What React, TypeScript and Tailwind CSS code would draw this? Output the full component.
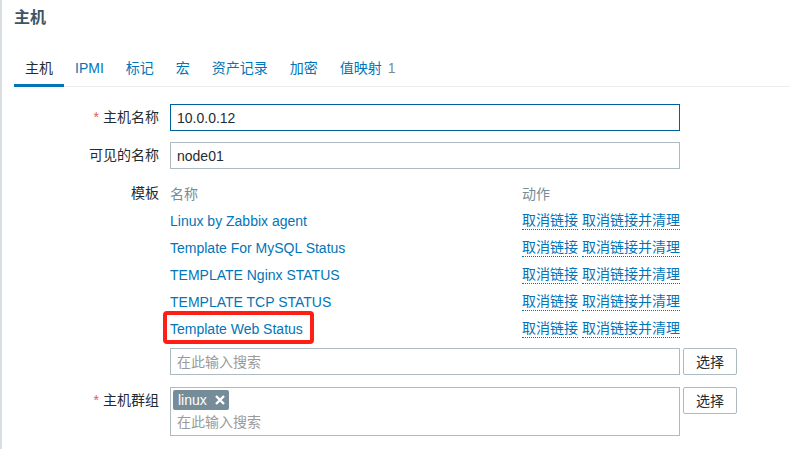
import type { ReactNode } from "react";

const tabs = [
  { label: "主机", active: true },
  { label: "IPMI" },
  { label: "标记" },
  { label: "宏" },
  { label: "资产记录" },
  { label: "加密" },
  { label: "值映射", count: 1 },
];

const templates = [
  { name: "Linux by Zabbix agent" },
  { name: "Template For MySQL Status" },
  { name: "TEMPLATE Nginx STATUS" },
  { name: "TEMPLATE TCP STATUS" },
  { name: "Template Web Status", marked: true },
];

function Row({ label, id, required, children }: { label: string; id: string; required?: boolean; children: ReactNode }) {
  return (
    <div className="flex items-start gap-[11px]">
      <label htmlFor={id} className="w-[145px] shrink-0 text-right leading-[27px]">
        {required && <span className="mr-1 text-[#e45959]">*</span>}
        {label}
      </label>
      <div className="min-w-0 flex-1">{children}</div>
    </div>
  );
}

function SelectButton() {
  return (
    <button type="button" className="h-[27px] w-[54px] shrink-0 rounded-[2px] border border-[#acbbc2] bg-white">
      选择
    </button>
  );
}

function ActionButton({ children }: { children: ReactNode }) {
  return (
    <button type="button" className="border-b border-dotted border-[#0275b8] leading-[18px] text-[#0275b8]">
      {children}
    </button>
  );
}

export default function App() {
  return (
    <div className="min-h-screen border-l-2 border-[#d7dde1] bg-white pl-3 font-['Liberation_Sans','Noto_Sans_CJK_SC',sans-serif] text-sm text-[#1f2c33]">
      <h1 className="pt-[5px] text-base leading-[26px] font-bold text-[#3c5563]">主机</h1>

      <nav className="mt-[21px] flex border-b border-[#ebeef0]">
        {tabs.map((tab) => (
          <a
            key={tab.label}
            href="#"
            className={
              tab.active
                ? "-mb-px border-b-3 border-[#0275b8] px-[11px] pt-1 pb-1 leading-6"
                : "px-[11px] pt-1 pb-1 leading-6 text-[#0275b8]"
            }
          >
            {tab.label}
            {tab.count && <span className="ml-[6px] text-[#768d99]">{tab.count}</span>}
          </a>
        ))}
      </nav>

      <form className="flex flex-col gap-[11px] pt-[17px]">
        <Row label="主机名称" id="host" required>
          <input id="host" defaultValue="10.0.0.12" className="block h-[27px] w-full max-w-[510px] border border-[#00609a] px-[6px] outline-none" />
        </Row>
        <Row label="可见的名称" id="visible">
          <input id="visible" defaultValue="node01" className="block h-[27px] w-full max-w-[510px] border border-[#acbbc2] px-[6px] outline-none" />
        </Row>
        <Row label="模板" id="templates">
          <table className="w-full max-w-[510px] text-left">
            <thead>
              <tr className="h-[27px] text-[#768d99]">
                <th className="p-0 font-normal">名称</th>
                <th className="w-[157px] p-0 font-normal">动作</th>
              </tr>
            </thead>
            <tbody>
              {templates.map((t) => (
                <tr key={t.name} className="h-[27px]">
                  <td className="p-0">
                    <span className="relative">
                      <a href="#" className="text-[#0275b8]">{t.name}</a>
                      {t.marked && (
                        <span className="pointer-events-none absolute -top-[10px] -right-[11px] -bottom-[7px] -left-[7px] rounded-[4px] border-4 border-[#ff2015]" />
                      )}
                    </span>
                  </td>
                  <td className="p-0">
                    <div className="flex gap-1 whitespace-nowrap">
                      <ActionButton>取消链接</ActionButton>
                      <ActionButton>取消链接并清理</ActionButton>
                    </div>
                  </td>
                </tr>
              ))}
            </tbody>
          </table>
          <div className="mt-[6px] mb-px flex gap-[3px]">
            <input id="templates" placeholder="在此输入搜索" className="block h-[27px] w-full max-w-[510px] border border-[#acbbc2] px-[6px] outline-none placeholder:text-[#9a9a9a]" />
            <SelectButton />
          </div>
        </Row>
        <Row label="主机群组" id="groups" required>
          <div className="flex items-start gap-[3px]">
            <div className="w-full max-w-[510px] border border-[#acbbc2] px-[2px] pt-[2px] pb-[2px]">
              <span className="flex h-5 w-14 items-center justify-between rounded-[2px] bg-[#768d99] pr-1 pl-[5px] text-white">
                linux
                <button type="button" aria-label="移除 linux">
                  <svg viewBox="0 0 10 10" className="block h-[10px] w-[10px]" stroke="currentColor" strokeWidth="2.4">
                    <path d="M1 1L9 9M9 1L1 9" />
                  </svg>
                </button>
              </span>
              <input id="groups" placeholder="在此输入搜索" className="mt-px block h-[22px] w-full px-1 outline-none placeholder:text-[#9a9a9a]" />
            </div>
            <SelectButton />
          </div>
        </Row>
      </form>
    </div>
  );
}
